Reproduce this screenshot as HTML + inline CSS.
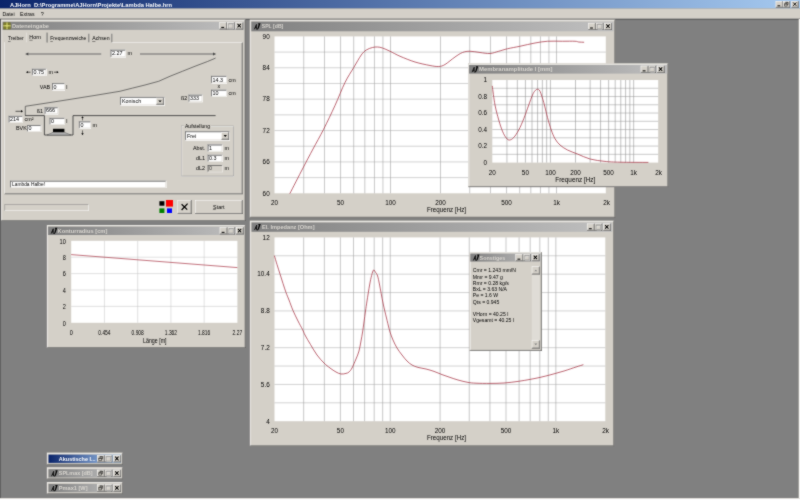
<!DOCTYPE html>
<html><head><meta charset="utf-8"><title>AJHorn</title>
<style>html,body{margin:0;padding:0;background:#808080;overflow:hidden}svg{display:block;font-family:"Liberation Sans",sans-serif}</style></head>
<body>
<svg width="800" height="500" viewBox="0 0 800 500">
<defs><filter id="soft" x="0" y="0" width="800" height="500" filterUnits="userSpaceOnUse" color-interpolation-filters="sRGB"><feConvolveMatrix order="3" kernelMatrix="1 2 1 2 16 2 1 2 1" divisor="28" edgeMode="duplicate" preserveAlpha="true"/></filter><linearGradient id="gA" x1="0" x2="1" y1="0" y2="0"><stop offset="0" stop-color="#0a246a"/><stop offset="1" stop-color="#a6caf0"/></linearGradient><linearGradient id="gI" x1="0" x2="1" y1="0" y2="0"><stop offset="0" stop-color="#808080"/><stop offset="1" stop-color="#c0c0c0"/></linearGradient></defs>
<g filter="url(#soft)">
<rect x="0" y="0" width="800" height="500" fill="#808080" />
<rect x="0" y="0" width="800" height="8.5" fill="url(#gA)" />
<text x="10" y="6.6" xml:space="preserve" font-size="5.39" fill="#fff" font-weight="bold" textLength="162" lengthAdjust="spacingAndGlyphs" >AJHorn  D:\Programme\AJHorn\Projekte\Lambda Halbe.hrn</text>
<rect x="775.7" y="1.1" width="7.2" height="6.6" fill="#d4d0c8" />
<rect x="775.7" y="1.1" width="7.2" height="0.49" fill="#ffffff" />
<rect x="775.7" y="1.1" width="0.48" height="6.6" fill="#ffffff" />
<rect x="775.7" y="7.21" width="7.2" height="0.49" fill="#404040" />
<rect x="782.42" y="1.1" width="0.48" height="6.6" fill="#404040" />
<rect x="776.18" y="6.72" width="6.25" height="0.49" fill="#808080" />
<rect x="781.95" y="1.59" width="0.48" height="5.62" fill="#808080" />
<g transform="translate(775.7,1.1) scale(0.45,0.47)"><rect x="4" y="9" width="6" height="2" fill="#000"/></g>
<rect x="782.9" y="1.1" width="7.2" height="6.6" fill="#d4d0c8" />
<rect x="782.9" y="1.1" width="7.2" height="0.49" fill="#ffffff" />
<rect x="782.9" y="1.1" width="0.48" height="6.6" fill="#ffffff" />
<rect x="782.9" y="7.21" width="7.2" height="0.49" fill="#404040" />
<rect x="789.62" y="1.1" width="0.48" height="6.6" fill="#404040" />
<rect x="783.38" y="6.72" width="6.25" height="0.49" fill="#808080" />
<rect x="789.15" y="1.59" width="0.48" height="5.62" fill="#808080" />
<g transform="translate(782.9,1.1) scale(0.45,0.47)"><path d="M5.5 2.5 h6 v5 h-2 M5.5 3.5 h6" stroke="#000" fill="none"/><path d="M3.5 5.5 h6 v5 h-6 z M3.5 6.5 h6" stroke="#000" fill="none"/></g>
<rect x="791.4" y="1.1" width="7.2" height="6.6" fill="#d4d0c8" />
<rect x="791.4" y="1.1" width="7.2" height="0.49" fill="#ffffff" />
<rect x="791.4" y="1.1" width="0.48" height="6.6" fill="#ffffff" />
<rect x="791.4" y="7.21" width="7.2" height="0.49" fill="#404040" />
<rect x="798.12" y="1.1" width="0.48" height="6.6" fill="#404040" />
<rect x="791.88" y="6.72" width="6.25" height="0.49" fill="#808080" />
<rect x="797.65" y="1.59" width="0.48" height="5.62" fill="#808080" />
<g transform="translate(791.4,1.1) scale(0.45,0.47)"><path d="M4 3 L11 10 M11 3 L4 10" stroke="#000" stroke-width="2" fill="none"/></g>
<rect x="0" y="8.5" width="800" height="10.2" fill="#d4d0c8" />
<text x="2.6" y="15.9" xml:space="preserve" font-size="5.39" fill="#000" textLength="12" lengthAdjust="spacingAndGlyphs" >Datei</text>
<text x="20" y="15.9" xml:space="preserve" font-size="5.39" fill="#000" textLength="14.5" lengthAdjust="spacingAndGlyphs" >Extras</text>
<text x="40.8" y="15.9" xml:space="preserve" font-size="5.39" fill="#000" >?</text>
<rect x="0" y="18.7" width="800" height="0.5" fill="#808080" />
<rect x="0" y="19.2" width="800" height="0.5" fill="#404040" />
<rect x="0" y="19.1" width="0.5" height="480.9" fill="#404040" />
<rect x="798.6" y="19.1" width="1.4" height="480.9" fill="#d4d0c8" />
<rect x="799.2" y="19.1" width="0.8" height="480.9" fill="#fff" />
<rect x="0" y="498.1" width="800" height="1.9" fill="#d4d0c8" />
<rect x="0" y="498.6" width="800" height="1.4" fill="#fff" />
<rect x="1.1" y="19.6" width="244.4" height="201.4" fill="#d4d0c8" />
<rect x="1.1" y="19.6" width="244.4" height="0.49" fill="#d4d0c8" />
<rect x="1.1" y="19.6" width="0.48" height="201.4" fill="#d4d0c8" />
<rect x="1.1" y="220.51" width="244.4" height="0.49" fill="#404040" />
<rect x="245.02" y="19.6" width="0.48" height="201.4" fill="#404040" />
<rect x="1.58" y="20.09" width="243.45" height="0.49" fill="#ffffff" />
<rect x="1.58" y="20.09" width="0.48" height="200.42" fill="#ffffff" />
<rect x="1.58" y="220.02" width="243.45" height="0.49" fill="#808080" />
<rect x="244.55" y="20.09" width="0.48" height="200.42" fill="#808080" />
<rect x="2.6" y="21.8" width="241.2" height="8.1" fill="url(#gI)" />
<g transform="translate(3.4,21.93) scale(0.48,0.49)"><rect x="0" y="1" width="15" height="14" fill="#6e6e28"/><path d="M7.5 1 v14 M0 8 h15" stroke="#d6d670" stroke-width="3" fill="none"/><path d="M3 1 v14 M12 1 v14 M0 4 h15 M0 12 h15" stroke="#909038" stroke-width="1" fill="none"/></g>
<text x="12" y="27.85" xml:space="preserve" font-size="5.39" fill="#d8d5cf" font-weight="bold" textLength="37" lengthAdjust="spacingAndGlyphs" >Dateneingabe</text>
<rect x="235.58" y="22.3" width="7.62" height="7.1" fill="#d4d0c8" />
<rect x="235.58" y="22.3" width="7.62" height="0.49" fill="#ffffff" />
<rect x="235.58" y="22.3" width="0.48" height="7.1" fill="#ffffff" />
<rect x="235.58" y="28.91" width="7.62" height="0.49" fill="#404040" />
<rect x="242.72" y="22.3" width="0.48" height="7.1" fill="#404040" />
<rect x="236.06" y="28.42" width="6.67" height="0.49" fill="#808080" />
<rect x="242.25" y="22.79" width="0.48" height="6.12" fill="#808080" />
<g transform="translate(235.58,22.3) scale(0.48,0.51)"><path d="M4 3 L11 10 M11 3 L4 10" stroke="#000" stroke-width="2" fill="none"/></g>
<rect x="226.96" y="22.3" width="7.62" height="7.1" fill="#d4d0c8" />
<rect x="226.96" y="22.3" width="7.62" height="0.49" fill="#ffffff" />
<rect x="226.96" y="22.3" width="0.48" height="7.1" fill="#ffffff" />
<rect x="226.96" y="28.91" width="7.62" height="0.49" fill="#404040" />
<rect x="234.1" y="22.3" width="0.48" height="7.1" fill="#404040" />
<rect x="227.44" y="28.42" width="6.67" height="0.49" fill="#808080" />
<rect x="233.63" y="22.79" width="0.48" height="6.12" fill="#808080" />
<g transform="translate(226.96,22.3) scale(0.48,0.51)"><path d="M4.5 3.5 h9 v9 h-9 z M4.5 4.5 h9" stroke="#fff" fill="none"/><path d="M3.5 2.5 h9 v9 h-9 z M3.5 3.5 h9" stroke="#808080" fill="none"/></g>
<rect x="219.34" y="22.3" width="7.62" height="7.1" fill="#d4d0c8" />
<rect x="219.34" y="22.3" width="7.62" height="0.49" fill="#ffffff" />
<rect x="219.34" y="22.3" width="0.48" height="7.1" fill="#ffffff" />
<rect x="219.34" y="28.91" width="7.62" height="0.49" fill="#404040" />
<rect x="226.49" y="22.3" width="0.48" height="7.1" fill="#404040" />
<rect x="219.82" y="28.42" width="6.67" height="0.49" fill="#808080" />
<rect x="226.01" y="22.79" width="0.48" height="6.12" fill="#808080" />
<g transform="translate(219.34,22.3) scale(0.48,0.51)"><rect x="4" y="9" width="6" height="2" fill="#000"/></g>
<rect x="4.5" y="42.2" width="238.1" height="0.49" fill="#d4d0c8" />
<rect x="4.5" y="42.2" width="0.48" height="152" fill="#d4d0c8" />
<rect x="4.5" y="193.71" width="238.1" height="0.49" fill="#404040" />
<rect x="242.12" y="42.2" width="0.48" height="152" fill="#404040" />
<rect x="4.98" y="193.22" width="237.15" height="0.49" fill="#808080" />
<rect x="241.65" y="42.69" width="0.48" height="151.02" fill="#808080" />
<rect x="112" y="42.2" width="130.6" height="0.49" fill="#fff" />
<rect x="4.5" y="42.2" width="0.48" height="151.51" fill="#fff" />
<rect x="26" y="32.2" width="21.4" height="10.49" fill="#d4d0c8" />
<rect x="26" y="32.6" width="0.48" height="9.6" fill="#f0efec" />
<rect x="46.92" y="32.6" width="0.48" height="10" fill="#404040" />
<rect x="46.45" y="32.6" width="0.48" height="9.8" fill="#808080" />
<rect x="88.72" y="33.8" width="0.48" height="8.4" fill="#404040" />
<rect x="88.25" y="33.8" width="0.48" height="8.4" fill="#808080" />
<rect x="111.72" y="33.8" width="0.48" height="8.4" fill="#404040" />
<rect x="111.25" y="33.8" width="0.48" height="8.4" fill="#808080" />
<text x="8" y="40.4" xml:space="preserve" font-size="5.39" fill="#000" textLength="15.6" lengthAdjust="spacingAndGlyphs" >Treiber</text>
<rect x="8" y="41" width="2.6" height="0.4" fill="#000" />
<text x="29.3" y="39.3" xml:space="preserve" font-size="5.39" fill="#000" textLength="11.8" lengthAdjust="spacingAndGlyphs" >Horn</text>
<rect x="29.3" y="39.9" width="3.3" height="0.4" fill="#000" />
<text x="50.3" y="40.4" xml:space="preserve" font-size="5.39" fill="#000" textLength="36" lengthAdjust="spacingAndGlyphs" >Frequenzweiche</text>
<rect x="50.3" y="41" width="2.5" height="0.4" fill="#000" />
<text x="92.2" y="40.4" xml:space="preserve" font-size="5.39" fill="#000" textLength="17.4" lengthAdjust="spacingAndGlyphs" >Achsen</text>
<rect x="92.2" y="41" width="3.2" height="0.4" fill="#000" />
<line x1="27" y1="54" x2="101.2" y2="54" stroke="#686868" stroke-width="1.1" />
<path d="M25.1 54 l3.2 -1.4 v2.8z" fill="#484848"/>
<line x1="140" y1="54" x2="214" y2="54" stroke="#686868" stroke-width="1.1" />
<path d="M216.2 54 l-3.2 -1.4 v2.8z" fill="#484848"/>
<rect x="110.4" y="49.6" width="15.4" height="7.8" fill="#fff" />
<rect x="110.4" y="49.6" width="15.4" height="0.49" fill="#808080" />
<rect x="110.4" y="49.6" width="0.48" height="7.8" fill="#808080" />
<rect x="110.4" y="56.91" width="15.4" height="0.49" fill="#ffffff" />
<rect x="125.32" y="49.6" width="0.48" height="7.8" fill="#ffffff" />
<rect x="110.88" y="50.09" width="14.45" height="0.49" fill="#404040" />
<rect x="110.88" y="50.09" width="0.48" height="6.82" fill="#404040" />
<rect x="110.88" y="56.42" width="14.45" height="0.49" fill="#d4d0c8" />
<rect x="124.85" y="50.09" width="0.48" height="6.82" fill="#d4d0c8" />
<text x="112" y="55.4" xml:space="preserve" font-size="5.39" fill="#000" >2.27</text>
<text x="127.6" y="55.4" xml:space="preserve" font-size="5.39" fill="#000" >m</text>
<rect x="31.9" y="68.7" width="14.6" height="7" fill="#fff" />
<rect x="31.9" y="68.7" width="14.6" height="0.49" fill="#808080" />
<rect x="31.9" y="68.7" width="0.48" height="7" fill="#808080" />
<rect x="31.9" y="75.21" width="14.6" height="0.49" fill="#ffffff" />
<rect x="46.02" y="68.7" width="0.48" height="7" fill="#ffffff" />
<rect x="32.38" y="69.19" width="13.65" height="0.49" fill="#404040" />
<rect x="32.38" y="69.19" width="0.48" height="6.02" fill="#404040" />
<rect x="32.38" y="74.72" width="13.65" height="0.49" fill="#d4d0c8" />
<rect x="45.55" y="69.19" width="0.48" height="6.02" fill="#d4d0c8" />
<text x="33.5" y="73.7" xml:space="preserve" font-size="5.39" fill="#000" >0.75</text>
<text x="48.4" y="73.8" xml:space="preserve" font-size="5.39" fill="#000" >m</text>
<line x1="27" y1="72.2" x2="30.5" y2="72.2" stroke="#000" stroke-width="0.6" />
<path d="M26 72.2 l1.8 -1.1 v2.2z" fill="#000"/>
<line x1="54" y1="72.2" x2="57.5" y2="72.2" stroke="#000" stroke-width="0.6" />
<path d="M58.6 72.2 l-1.8 -1.1 v2.2z" fill="#000"/>
<text x="39.8" y="88.6" xml:space="preserve" font-size="5.39" fill="#000" >VAB</text>
<rect x="52" y="83.1" width="13" height="7.4" fill="#fff" />
<rect x="52" y="83.1" width="13" height="0.49" fill="#808080" />
<rect x="52" y="83.1" width="0.48" height="7.4" fill="#808080" />
<rect x="52" y="90.01" width="13" height="0.49" fill="#ffffff" />
<rect x="64.52" y="83.1" width="0.48" height="7.4" fill="#ffffff" />
<rect x="52.48" y="83.59" width="12.05" height="0.49" fill="#404040" />
<rect x="52.48" y="83.59" width="0.48" height="6.42" fill="#404040" />
<rect x="52.48" y="89.52" width="12.05" height="0.49" fill="#d4d0c8" />
<rect x="64.05" y="83.59" width="0.48" height="6.42" fill="#d4d0c8" />
<text x="53.6" y="88.5" xml:space="preserve" font-size="5.39" fill="#000" >0</text>
<text x="66.2" y="88.6" xml:space="preserve" font-size="5.39" fill="#000" >l</text>
<polyline points="25.3,115.6 25.3,106.3 45,103.3 70,99.4 95,95.4 120,91.25 132.5,88.1 145,85 158.75,81.25 170,76.25 182.5,71.25 195,66.25 207.5,61.5 215.6,58.1" fill="none" stroke="#404040" stroke-width="0.7"/>
<polyline points="25,115.6 44.4,115.6 44.4,135 73,135 73,115.6 215.6,115.6" fill="none" stroke="#404040" stroke-width="0.9"/>
<line x1="15.5" y1="111.3" x2="21.5" y2="111.3" stroke="#000" stroke-width="0.6" />
<path d="M23 111.3 l-2 -1.2 v2.4z" fill="#000"/>
<text x="36.8" y="113" xml:space="preserve" font-size="5.39" fill="#000" >ß1</text>
<rect x="44.5" y="107.2" width="13.7" height="7.2" fill="#fff" />
<rect x="44.5" y="107.2" width="13.7" height="0.49" fill="#808080" />
<rect x="44.5" y="107.2" width="0.48" height="7.2" fill="#808080" />
<rect x="44.5" y="113.91" width="13.7" height="0.49" fill="#ffffff" />
<rect x="57.72" y="107.2" width="0.48" height="7.2" fill="#ffffff" />
<rect x="44.98" y="107.69" width="12.75" height="0.49" fill="#404040" />
<rect x="44.98" y="107.69" width="0.48" height="6.22" fill="#404040" />
<rect x="44.98" y="113.42" width="12.75" height="0.49" fill="#d4d0c8" />
<rect x="57.25" y="107.69" width="0.48" height="6.22" fill="#d4d0c8" />
<text x="46.1" y="112.4" xml:space="preserve" font-size="5.39" fill="#000" >666</text>
<rect x="8.5" y="115.8" width="14.5" height="7.2" fill="#fff" />
<rect x="8.5" y="115.8" width="14.5" height="0.49" fill="#808080" />
<rect x="8.5" y="115.8" width="0.48" height="7.2" fill="#808080" />
<rect x="8.5" y="122.51" width="14.5" height="0.49" fill="#ffffff" />
<rect x="22.52" y="115.8" width="0.48" height="7.2" fill="#ffffff" />
<rect x="8.98" y="116.29" width="13.55" height="0.49" fill="#404040" />
<rect x="8.98" y="116.29" width="0.48" height="6.22" fill="#404040" />
<rect x="8.98" y="122.02" width="13.55" height="0.49" fill="#d4d0c8" />
<rect x="22.05" y="116.29" width="0.48" height="6.22" fill="#d4d0c8" />
<text x="10.1" y="121" xml:space="preserve" font-size="5.39" fill="#000" >214</text>
<text x="24.6" y="121.4" xml:space="preserve" font-size="5.39" fill="#000" >cm²</text>
<text x="16" y="130.2" xml:space="preserve" font-size="5.39" fill="#000" >BVK</text>
<rect x="27" y="125" width="14.2" height="7" fill="#fff" />
<rect x="27" y="125" width="14.2" height="0.49" fill="#808080" />
<rect x="27" y="125" width="0.48" height="7" fill="#808080" />
<rect x="27" y="131.51" width="14.2" height="0.49" fill="#ffffff" />
<rect x="40.72" y="125" width="0.48" height="7" fill="#ffffff" />
<rect x="27.48" y="125.49" width="13.25" height="0.49" fill="#404040" />
<rect x="27.48" y="125.49" width="0.48" height="6.02" fill="#404040" />
<rect x="27.48" y="131.02" width="13.25" height="0.49" fill="#d4d0c8" />
<rect x="40.25" y="125.49" width="0.48" height="6.02" fill="#d4d0c8" />
<text x="28.6" y="130" xml:space="preserve" font-size="5.39" fill="#000" >0</text>
<rect x="49.4" y="117.8" width="15.6" height="7.2" fill="#fff" />
<rect x="49.4" y="117.8" width="15.6" height="0.49" fill="#808080" />
<rect x="49.4" y="117.8" width="0.48" height="7.2" fill="#808080" />
<rect x="49.4" y="124.51" width="15.6" height="0.49" fill="#ffffff" />
<rect x="64.52" y="117.8" width="0.48" height="7.2" fill="#ffffff" />
<rect x="49.88" y="118.29" width="14.65" height="0.49" fill="#404040" />
<rect x="49.88" y="118.29" width="0.48" height="6.22" fill="#404040" />
<rect x="49.88" y="124.02" width="14.65" height="0.49" fill="#d4d0c8" />
<rect x="64.05" y="118.29" width="0.48" height="6.22" fill="#d4d0c8" />
<text x="51" y="123" xml:space="preserve" font-size="5.39" fill="#000" >0</text>
<text x="66.2" y="123.2" xml:space="preserve" font-size="5.39" fill="#000" >l</text>
<rect x="53" y="128.8" width="11.4" height="3.5" fill="#000" />
<path d="M53 132.3 L47 135 L71 135 L64.4 132.3z" fill="#b0b0b0" stroke="#404040" stroke-width="0.4"/>
<rect x="78.8" y="121.3" width="12.2" height="7.4" fill="#fff" />
<rect x="78.8" y="121.3" width="12.2" height="0.49" fill="#808080" />
<rect x="78.8" y="121.3" width="0.48" height="7.4" fill="#808080" />
<rect x="78.8" y="128.21" width="12.2" height="0.49" fill="#ffffff" />
<rect x="90.52" y="121.3" width="0.48" height="7.4" fill="#ffffff" />
<rect x="79.28" y="121.79" width="11.25" height="0.49" fill="#404040" />
<rect x="79.28" y="121.79" width="0.48" height="6.42" fill="#404040" />
<rect x="79.28" y="127.72" width="11.25" height="0.49" fill="#d4d0c8" />
<rect x="90.05" y="121.79" width="0.48" height="6.42" fill="#d4d0c8" />
<text x="80.4" y="126.7" xml:space="preserve" font-size="5.39" fill="#000" >0</text>
<text x="92.6" y="127" xml:space="preserve" font-size="5.39" fill="#000" >m</text>
<line x1="82.5" y1="117" x2="82.5" y2="120.4" stroke="#000" stroke-width="0.5" />
<path d="M82.5 116.2 l-1.2 1.9 h2.4z" fill="#000"/>
<line x1="82.5" y1="130.4" x2="82.5" y2="134" stroke="#000" stroke-width="0.5" />
<path d="M82.5 135.2 l-1.2 -1.9 h2.4z" fill="#000"/>
<rect x="120" y="96.9" width="44.8" height="8.7" fill="#fff" />
<rect x="120" y="96.9" width="44.8" height="0.49" fill="#808080" />
<rect x="120" y="96.9" width="0.48" height="8.7" fill="#808080" />
<rect x="120" y="105.11" width="44.8" height="0.49" fill="#ffffff" />
<rect x="164.32" y="96.9" width="0.48" height="8.7" fill="#ffffff" />
<rect x="120.48" y="97.39" width="43.85" height="0.49" fill="#404040" />
<rect x="120.48" y="97.39" width="0.48" height="7.72" fill="#404040" />
<rect x="120.48" y="104.62" width="43.85" height="0.49" fill="#d4d0c8" />
<rect x="163.85" y="97.39" width="0.48" height="7.72" fill="#d4d0c8" />
<rect x="156.23" y="97.88" width="7.62" height="6.74" fill="#d4d0c8" />
<rect x="156.23" y="97.88" width="7.62" height="0.49" fill="#ffffff" />
<rect x="156.23" y="97.88" width="0.48" height="6.74" fill="#ffffff" />
<rect x="156.23" y="104.13" width="7.62" height="0.49" fill="#404040" />
<rect x="163.37" y="97.88" width="0.48" height="6.74" fill="#404040" />
<rect x="156.7" y="103.64" width="6.67" height="0.49" fill="#808080" />
<rect x="162.9" y="98.37" width="0.48" height="5.76" fill="#808080" />
<path d="M158.34 100.45 h3.4 l-1.7 1.8z" fill="#000"/>
<text x="122" y="103" xml:space="preserve" font-size="5.39" fill="#000" >Konisch</text>
<text x="181" y="100.2" xml:space="preserve" font-size="5.39" fill="#000" >ß2</text>
<rect x="188.4" y="94.6" width="14.2" height="7.6" fill="#fff" />
<rect x="188.4" y="94.6" width="14.2" height="0.49" fill="#808080" />
<rect x="188.4" y="94.6" width="0.48" height="7.6" fill="#808080" />
<rect x="188.4" y="101.71" width="14.2" height="0.49" fill="#ffffff" />
<rect x="202.12" y="94.6" width="0.48" height="7.6" fill="#ffffff" />
<rect x="188.88" y="95.09" width="13.25" height="0.49" fill="#404040" />
<rect x="188.88" y="95.09" width="0.48" height="6.62" fill="#404040" />
<rect x="188.88" y="101.22" width="13.25" height="0.49" fill="#d4d0c8" />
<rect x="201.65" y="95.09" width="0.48" height="6.62" fill="#d4d0c8" />
<text x="190" y="100.2" xml:space="preserve" font-size="5.39" fill="#000" >333</text>
<rect x="211" y="75.8" width="16" height="7.8" fill="#fff" />
<rect x="211" y="75.8" width="16" height="0.49" fill="#808080" />
<rect x="211" y="75.8" width="0.48" height="7.8" fill="#808080" />
<rect x="211" y="83.11" width="16" height="0.49" fill="#ffffff" />
<rect x="226.52" y="75.8" width="0.48" height="7.8" fill="#ffffff" />
<rect x="211.48" y="76.29" width="15.05" height="0.49" fill="#404040" />
<rect x="211.48" y="76.29" width="0.48" height="6.82" fill="#404040" />
<rect x="211.48" y="82.62" width="15.05" height="0.49" fill="#d4d0c8" />
<rect x="226.05" y="76.29" width="0.48" height="6.82" fill="#d4d0c8" />
<text x="212.6" y="81.6" xml:space="preserve" font-size="5.39" fill="#000" >14.3</text>
<text x="228.6" y="81.6" xml:space="preserve" font-size="5.39" fill="#000" >cm</text>
<text x="217.6" y="88.4" xml:space="preserve" font-size="5.39" fill="#000" >x</text>
<rect x="211" y="89.6" width="16" height="7.3" fill="#fff" />
<rect x="211" y="89.6" width="16" height="0.49" fill="#808080" />
<rect x="211" y="89.6" width="0.48" height="7.3" fill="#808080" />
<rect x="211" y="96.41" width="16" height="0.49" fill="#ffffff" />
<rect x="226.52" y="89.6" width="0.48" height="7.3" fill="#ffffff" />
<rect x="211.48" y="90.09" width="15.05" height="0.49" fill="#404040" />
<rect x="211.48" y="90.09" width="0.48" height="6.32" fill="#404040" />
<rect x="211.48" y="95.92" width="15.05" height="0.49" fill="#d4d0c8" />
<rect x="226.05" y="90.09" width="0.48" height="6.32" fill="#d4d0c8" />
<text x="212.6" y="94.9" xml:space="preserve" font-size="5.39" fill="#000" >10</text>
<text x="228.6" y="95" xml:space="preserve" font-size="5.39" fill="#000" >cm</text>
<rect x="181.2" y="125.8" width="52.8" height="0.49" fill="#808080" />
<rect x="181.2" y="125.8" width="0.48" height="51" fill="#808080" />
<rect x="181.2" y="176.31" width="52.8" height="0.49" fill="#ffffff" />
<rect x="233.52" y="125.8" width="0.48" height="51" fill="#ffffff" />
<rect x="181.68" y="126.29" width="51.85" height="0.49" fill="#ffffff" />
<rect x="181.68" y="126.29" width="0.48" height="50.02" fill="#ffffff" />
<rect x="181.68" y="175.82" width="51.85" height="0.49" fill="#808080" />
<rect x="233.05" y="126.29" width="0.48" height="50.02" fill="#808080" />
<rect x="184" y="124" width="27" height="4" fill="#d4d0c8" />
<text x="185" y="128" xml:space="preserve" font-size="5.39" fill="#000" textLength="25" lengthAdjust="spacingAndGlyphs" >Aufstellung</text>
<rect x="185" y="131.2" width="45" height="9.4" fill="#fff" />
<rect x="185" y="131.2" width="45" height="0.49" fill="#808080" />
<rect x="185" y="131.2" width="0.48" height="9.4" fill="#808080" />
<rect x="185" y="140.11" width="45" height="0.49" fill="#ffffff" />
<rect x="229.52" y="131.2" width="0.48" height="9.4" fill="#ffffff" />
<rect x="185.48" y="131.69" width="44.05" height="0.49" fill="#404040" />
<rect x="185.48" y="131.69" width="0.48" height="8.42" fill="#404040" />
<rect x="185.48" y="139.62" width="44.05" height="0.49" fill="#d4d0c8" />
<rect x="229.05" y="131.69" width="0.48" height="8.42" fill="#d4d0c8" />
<rect x="221.43" y="132.18" width="7.62" height="7.44" fill="#d4d0c8" />
<rect x="221.43" y="132.18" width="7.62" height="0.49" fill="#ffffff" />
<rect x="221.43" y="132.18" width="0.48" height="7.44" fill="#ffffff" />
<rect x="221.43" y="139.13" width="7.62" height="0.49" fill="#404040" />
<rect x="228.57" y="132.18" width="0.48" height="7.44" fill="#404040" />
<rect x="221.9" y="138.64" width="6.67" height="0.49" fill="#808080" />
<rect x="228.1" y="132.67" width="0.48" height="6.46" fill="#808080" />
<path d="M223.54 135.1 h3.4 l-1.7 1.8z" fill="#000"/>
<text x="187" y="138" xml:space="preserve" font-size="5.39" fill="#000" >Frei</text>
<text x="193" y="150" xml:space="preserve" font-size="5.39" fill="#000" >Abst.</text>
<rect x="207.5" y="144.4" width="15.1" height="7.5" fill="#fff" />
<rect x="207.5" y="144.4" width="15.1" height="0.49" fill="#808080" />
<rect x="207.5" y="144.4" width="0.48" height="7.5" fill="#808080" />
<rect x="207.5" y="151.41" width="15.1" height="0.49" fill="#ffffff" />
<rect x="222.12" y="144.4" width="0.48" height="7.5" fill="#ffffff" />
<rect x="207.98" y="144.89" width="14.15" height="0.49" fill="#404040" />
<rect x="207.98" y="144.89" width="0.48" height="6.52" fill="#404040" />
<rect x="207.98" y="150.92" width="14.15" height="0.49" fill="#d4d0c8" />
<rect x="221.65" y="144.89" width="0.48" height="6.52" fill="#d4d0c8" />
<text x="209.1" y="149.9" xml:space="preserve" font-size="5.39" fill="#000" >1</text>
<text x="224.6" y="150" xml:space="preserve" font-size="5.39" fill="#000" >m</text>
<text x="196" y="160" xml:space="preserve" font-size="5.39" fill="#000" >dL1</text>
<rect x="207.5" y="154.7" width="15.1" height="7.3" fill="#fff" />
<rect x="207.5" y="154.7" width="15.1" height="0.49" fill="#808080" />
<rect x="207.5" y="154.7" width="0.48" height="7.3" fill="#808080" />
<rect x="207.5" y="161.51" width="15.1" height="0.49" fill="#ffffff" />
<rect x="222.12" y="154.7" width="0.48" height="7.3" fill="#ffffff" />
<rect x="207.98" y="155.19" width="14.15" height="0.49" fill="#404040" />
<rect x="207.98" y="155.19" width="0.48" height="6.32" fill="#404040" />
<rect x="207.98" y="161.02" width="14.15" height="0.49" fill="#d4d0c8" />
<rect x="221.65" y="155.19" width="0.48" height="6.32" fill="#d4d0c8" />
<text x="209.1" y="160" xml:space="preserve" font-size="5.39" fill="#000" >0.3</text>
<text x="224.6" y="160" xml:space="preserve" font-size="5.39" fill="#000" >m</text>
<text x="196" y="170.2" xml:space="preserve" font-size="5.39" fill="#000" >dL2</text>
<rect x="207.5" y="165" width="15.1" height="7.2" fill="#d4d0c8" />
<rect x="207.5" y="165" width="15.1" height="0.49" fill="#808080" />
<rect x="207.5" y="165" width="0.48" height="7.2" fill="#808080" />
<rect x="207.5" y="171.71" width="15.1" height="0.49" fill="#ffffff" />
<rect x="222.12" y="165" width="0.48" height="7.2" fill="#ffffff" />
<rect x="207.98" y="165.49" width="14.15" height="0.49" fill="#404040" />
<rect x="207.98" y="165.49" width="0.48" height="6.22" fill="#404040" />
<rect x="207.98" y="171.22" width="14.15" height="0.49" fill="#d4d0c8" />
<rect x="221.65" y="165.49" width="0.48" height="6.22" fill="#d4d0c8" />
<text x="209.1" y="170.2" xml:space="preserve" font-size="5.39" fill="#404040" >0</text>
<text x="224.6" y="170.2" xml:space="preserve" font-size="5.39" fill="#000" >m</text>
<rect x="10" y="180.6" width="156.3" height="7.4" fill="#fff" />
<rect x="10" y="180.6" width="156.3" height="0.49" fill="#808080" />
<rect x="10" y="180.6" width="0.48" height="7.4" fill="#808080" />
<rect x="10" y="187.51" width="156.3" height="0.49" fill="#ffffff" />
<rect x="165.82" y="180.6" width="0.48" height="7.4" fill="#ffffff" />
<rect x="10.48" y="181.09" width="155.35" height="0.49" fill="#404040" />
<rect x="10.48" y="181.09" width="0.48" height="6.42" fill="#404040" />
<rect x="10.48" y="187.02" width="155.35" height="0.49" fill="#d4d0c8" />
<rect x="165.35" y="181.09" width="0.48" height="6.42" fill="#d4d0c8" />
<text x="12" y="186" xml:space="preserve" font-size="5.39" fill="#000" textLength="33" lengthAdjust="spacingAndGlyphs" >Lambda Halbe!</text>
<rect x="4.6" y="204.4" width="84" height="6.6" fill="#d4d0c8" />
<rect x="4.6" y="204.4" width="84" height="0.49" fill="#808080" />
<rect x="4.6" y="204.4" width="0.48" height="6.6" fill="#808080" />
<rect x="4.6" y="210.51" width="84" height="0.49" fill="#ffffff" />
<rect x="88.12" y="204.4" width="0.48" height="6.6" fill="#ffffff" />
<rect x="159.4" y="201.2" width="5" height="4.5" fill="#000" />
<rect x="166" y="200" width="7" height="6.6" fill="#ff0000" />
<rect x="159.4" y="208.4" width="5" height="4.6" fill="#008000" />
<rect x="167" y="208.4" width="5" height="4.6" fill="#0000ff" />
<rect x="177.5" y="200" width="14.1" height="13.9" fill="#d4d0c8" />
<rect x="177.5" y="200" width="14.1" height="0.49" fill="#ffffff" />
<rect x="177.5" y="200" width="0.48" height="13.9" fill="#ffffff" />
<rect x="177.5" y="213.41" width="14.1" height="0.49" fill="#404040" />
<rect x="191.12" y="200" width="0.48" height="13.9" fill="#404040" />
<rect x="177.98" y="212.92" width="13.15" height="0.49" fill="#808080" />
<rect x="190.65" y="200.49" width="0.48" height="12.92" fill="#808080" />
<path d="M181.6 204.2 l5.6 5.4 M187.6 203.6 l-6 6.4" stroke="#000" stroke-width="1.25" fill="none"/>
<rect x="195" y="200" width="47.6" height="14" fill="#d4d0c8" />
<rect x="195" y="200" width="47.6" height="0.49" fill="#ffffff" />
<rect x="195" y="200" width="0.48" height="14" fill="#ffffff" />
<rect x="195" y="213.51" width="47.6" height="0.49" fill="#404040" />
<rect x="242.12" y="200" width="0.48" height="14" fill="#404040" />
<rect x="195.48" y="213.02" width="46.65" height="0.49" fill="#808080" />
<rect x="241.65" y="200.49" width="0.48" height="13.02" fill="#808080" />
<text x="218.8" y="209" xml:space="preserve" font-size="5.39" fill="#000" text-anchor="middle" >Start</text>
<rect x="212.9" y="209.6" width="2.9" height="0.4" fill="#000" />
<rect x="249.8" y="19.7" width="365.4" height="198" fill="#d4d0c8" />
<rect x="249.8" y="19.7" width="365.4" height="0.49" fill="#d4d0c8" />
<rect x="249.8" y="19.7" width="0.48" height="198" fill="#d4d0c8" />
<rect x="249.8" y="217.21" width="365.4" height="0.49" fill="#404040" />
<rect x="614.72" y="19.7" width="0.48" height="198" fill="#404040" />
<rect x="250.28" y="20.19" width="364.45" height="0.49" fill="#ffffff" />
<rect x="250.28" y="20.19" width="0.48" height="197.02" fill="#ffffff" />
<rect x="250.28" y="216.72" width="364.45" height="0.49" fill="#808080" />
<rect x="614.25" y="20.19" width="0.48" height="197.02" fill="#808080" />
<rect x="251.3" y="21.6" width="362.2" height="9.7" fill="url(#gI)" />
<g transform="translate(253.3,22.73) scale(0.48,0.49)"><path d="M2.2 13.5 L6.6 3.5 L6.2 13 M3.6 9.6 L6.6 9.6" stroke="#000" stroke-width="1.7" fill="none"/><path d="M10.5 1.2 L15 1.2 L11.4 11.5 Q10.4 14.6 6.6 14.2 L7 12.4 Q8.6 12.8 9 11 L11.2 3.2 L10 3.2 Z" fill="#000"/></g>
<text x="261.8" y="28.45" xml:space="preserve" font-size="5.39" fill="#d8d5cf" font-weight="bold" textLength="21.5" lengthAdjust="spacingAndGlyphs" >SPL [dB]</text>
<rect x="604.38" y="22.9" width="7.62" height="7.1" fill="#d4d0c8" />
<rect x="604.38" y="22.9" width="7.62" height="0.49" fill="#ffffff" />
<rect x="604.38" y="22.9" width="0.48" height="7.1" fill="#ffffff" />
<rect x="604.38" y="29.51" width="7.62" height="0.49" fill="#404040" />
<rect x="611.52" y="22.9" width="0.48" height="7.1" fill="#404040" />
<rect x="604.86" y="29.02" width="6.67" height="0.49" fill="#808080" />
<rect x="611.05" y="23.39" width="0.48" height="6.12" fill="#808080" />
<g transform="translate(604.38,22.9) scale(0.48,0.51)"><path d="M4 3 L11 10 M11 3 L4 10" stroke="#000" stroke-width="2" fill="none"/></g>
<rect x="595.76" y="22.9" width="7.62" height="7.1" fill="#d4d0c8" />
<rect x="595.76" y="22.9" width="7.62" height="0.49" fill="#ffffff" />
<rect x="595.76" y="22.9" width="0.48" height="7.1" fill="#ffffff" />
<rect x="595.76" y="29.51" width="7.62" height="0.49" fill="#404040" />
<rect x="602.9" y="22.9" width="0.48" height="7.1" fill="#404040" />
<rect x="596.24" y="29.02" width="6.67" height="0.49" fill="#808080" />
<rect x="602.43" y="23.39" width="0.48" height="6.12" fill="#808080" />
<g transform="translate(595.76,22.9) scale(0.48,0.51)"><path d="M4.5 3.5 h9 v9 h-9 z M4.5 4.5 h9" stroke="#fff" fill="none"/><path d="M3.5 2.5 h9 v9 h-9 z M3.5 3.5 h9" stroke="#808080" fill="none"/></g>
<rect x="588.14" y="22.9" width="7.62" height="7.1" fill="#d4d0c8" />
<rect x="588.14" y="22.9" width="7.62" height="0.49" fill="#ffffff" />
<rect x="588.14" y="22.9" width="0.48" height="7.1" fill="#ffffff" />
<rect x="588.14" y="29.51" width="7.62" height="0.49" fill="#404040" />
<rect x="595.29" y="22.9" width="0.48" height="7.1" fill="#404040" />
<rect x="588.62" y="29.02" width="6.67" height="0.49" fill="#808080" />
<rect x="594.81" y="23.39" width="0.48" height="6.12" fill="#808080" />
<g transform="translate(588.14,22.9) scale(0.48,0.51)"><rect x="4" y="9" width="6" height="2" fill="#000"/></g>
<rect x="274.5" y="36.4" width="331.3" height="156.9" fill="#fff" />
<line x1="303.73" y1="36.4" x2="303.73" y2="193.3" stroke="#8c8c8c" stroke-width="0.48" />
<line x1="324.47" y1="36.4" x2="324.47" y2="193.3" stroke="#8c8c8c" stroke-width="0.48" />
<line x1="340.56" y1="36.4" x2="340.56" y2="193.3" stroke="#8c8c8c" stroke-width="0.48" />
<line x1="353.7" y1="36.4" x2="353.7" y2="193.3" stroke="#8c8c8c" stroke-width="0.48" />
<line x1="364.82" y1="36.4" x2="364.82" y2="193.3" stroke="#8c8c8c" stroke-width="0.48" />
<line x1="374.44" y1="36.4" x2="374.44" y2="193.3" stroke="#8c8c8c" stroke-width="0.48" />
<line x1="382.93" y1="36.4" x2="382.93" y2="193.3" stroke="#8c8c8c" stroke-width="0.48" />
<line x1="390.53" y1="36.4" x2="390.53" y2="193.3" stroke="#8c8c8c" stroke-width="0.48" />
<line x1="440.5" y1="36.4" x2="440.5" y2="193.3" stroke="#8c8c8c" stroke-width="0.48" />
<line x1="469.73" y1="36.4" x2="469.73" y2="193.3" stroke="#8c8c8c" stroke-width="0.48" />
<line x1="490.47" y1="36.4" x2="490.47" y2="193.3" stroke="#8c8c8c" stroke-width="0.48" />
<line x1="506.56" y1="36.4" x2="506.56" y2="193.3" stroke="#8c8c8c" stroke-width="0.48" />
<line x1="519.7" y1="36.4" x2="519.7" y2="193.3" stroke="#8c8c8c" stroke-width="0.48" />
<line x1="530.82" y1="36.4" x2="530.82" y2="193.3" stroke="#8c8c8c" stroke-width="0.48" />
<line x1="540.44" y1="36.4" x2="540.44" y2="193.3" stroke="#8c8c8c" stroke-width="0.48" />
<line x1="548.93" y1="36.4" x2="548.93" y2="193.3" stroke="#8c8c8c" stroke-width="0.48" />
<line x1="556.53" y1="36.4" x2="556.53" y2="193.3" stroke="#8c8c8c" stroke-width="0.48" />
<line x1="274.5" y1="52.09" x2="605.8" y2="52.09" stroke="#a2a2a2" stroke-width="0.48" />
<line x1="274.5" y1="67.78" x2="605.8" y2="67.78" stroke="#a2a2a2" stroke-width="0.48" />
<line x1="274.5" y1="83.47" x2="605.8" y2="83.47" stroke="#a2a2a2" stroke-width="0.48" />
<line x1="274.5" y1="99.16" x2="605.8" y2="99.16" stroke="#a2a2a2" stroke-width="0.48" />
<line x1="274.5" y1="114.85" x2="605.8" y2="114.85" stroke="#a2a2a2" stroke-width="0.48" />
<line x1="274.5" y1="130.54" x2="605.8" y2="130.54" stroke="#a2a2a2" stroke-width="0.48" />
<line x1="274.5" y1="146.23" x2="605.8" y2="146.23" stroke="#a2a2a2" stroke-width="0.48" />
<line x1="274.5" y1="161.92" x2="605.8" y2="161.92" stroke="#a2a2a2" stroke-width="0.48" />
<line x1="274.5" y1="177.61" x2="605.8" y2="177.61" stroke="#a2a2a2" stroke-width="0.48" />
<text x="269.7" y="38.7" xml:space="preserve" font-size="6.37" fill="#000" text-anchor="end" >90</text>
<text x="269.7" y="70.08" xml:space="preserve" font-size="6.37" fill="#000" text-anchor="end" >84</text>
<text x="269.7" y="101.46" xml:space="preserve" font-size="6.37" fill="#000" text-anchor="end" >78</text>
<text x="269.7" y="132.84" xml:space="preserve" font-size="6.37" fill="#000" text-anchor="end" >72</text>
<text x="269.7" y="164.22" xml:space="preserve" font-size="6.37" fill="#000" text-anchor="end" >66</text>
<text x="269.7" y="195.6" xml:space="preserve" font-size="6.37" fill="#000" text-anchor="end" >60</text>
<text x="274.5" y="204.8" xml:space="preserve" font-size="6.37" fill="#000" text-anchor="middle" >20</text>
<text x="340.56" y="204.8" xml:space="preserve" font-size="6.37" fill="#000" text-anchor="middle" >50</text>
<text x="390.53" y="204.8" xml:space="preserve" font-size="6.37" fill="#000" text-anchor="middle" >100</text>
<text x="440.5" y="204.8" xml:space="preserve" font-size="6.37" fill="#000" text-anchor="middle" >200</text>
<text x="506.56" y="204.8" xml:space="preserve" font-size="6.37" fill="#000" text-anchor="middle" >500</text>
<text x="556.53" y="204.8" xml:space="preserve" font-size="6.37" fill="#000" text-anchor="middle" >1k</text>
<text x="606.5" y="204.8" xml:space="preserve" font-size="6.37" fill="#000" text-anchor="middle" >2k</text>
<text x="427" y="212.3" xml:space="preserve" font-size="6.37" fill="#000" textLength="39" lengthAdjust="spacingAndGlyphs" >Frequenz [Hz]</text>
<path d="M290 193.3 C292.17 189.08 299.17 175.38 303 168 C306.83 160.62 309.58 155.42 313 149 C316.42 142.58 319.83 136.75 323.5 129.5 C327.17 122.25 331.42 113.33 335 105.5 C338.58 97.67 341.88 88.83 345 82.5 C348.12 76.17 351.04 72.08 353.75 67.5 C356.46 62.92 359.17 57.92 361.25 55 C363.33 52.08 364.38 51.25 366.25 50 C368.12 48.75 370.62 48 372.5 47.5 C374.38 47 375.83 46.92 377.5 47 C379.17 47.08 380.42 47.29 382.5 48 C384.58 48.71 387.08 49.88 390 51.25 C392.92 52.62 395.83 54.46 400 56.25 C404.17 58.04 410 60.46 415 62 C420 63.54 426.04 64.75 430 65.5 C433.96 66.25 436.25 66.67 438.75 66.5 C441.25 66.33 442.29 66.08 445 64.5 C447.71 62.92 452.08 59 455 57 C457.92 55 460 53.46 462.5 52.5 C465 51.54 467.08 51.25 470 51.25 C472.92 51.25 476.67 52.12 480 52.5 C483.33 52.88 486.88 53.71 490 53.5 C493.12 53.29 495.83 52.04 498.75 51.25 C501.67 50.46 503.96 49.58 507.5 48.75 C511.04 47.92 515.42 47.21 520 46.25 C524.58 45.29 530.42 43.83 535 43 C539.58 42.17 542.92 41.54 547.5 41.25 C552.08 40.96 557.92 41.25 562.5 41.25 C567.08 41.25 572.29 41.12 575 41.25 C577.71 41.38 577.29 41.83 578.75 42 C580.21 42.17 582.92 42.21 583.75 42.25" fill="none" stroke="#a43242" stroke-width="0.75" stroke-linecap="round"/>
<rect x="249.9" y="220.7" width="364.2" height="225.5" fill="#d4d0c8" />
<rect x="249.9" y="220.7" width="364.2" height="0.49" fill="#d4d0c8" />
<rect x="249.9" y="220.7" width="0.48" height="225.5" fill="#d4d0c8" />
<rect x="249.9" y="445.71" width="364.2" height="0.49" fill="#404040" />
<rect x="613.62" y="220.7" width="0.48" height="225.5" fill="#404040" />
<rect x="250.38" y="221.19" width="363.25" height="0.49" fill="#ffffff" />
<rect x="250.38" y="221.19" width="0.48" height="224.52" fill="#ffffff" />
<rect x="250.38" y="445.22" width="363.25" height="0.49" fill="#808080" />
<rect x="613.15" y="221.19" width="0.48" height="224.52" fill="#808080" />
<rect x="251.5" y="222.5" width="360.8" height="9.3" fill="url(#gI)" />
<g transform="translate(253.5,223.43) scale(0.48,0.49)"><path d="M2.2 13.5 L6.6 3.5 L6.2 13 M3.6 9.6 L6.6 9.6" stroke="#000" stroke-width="1.7" fill="none"/><path d="M10.5 1.2 L15 1.2 L11.4 11.5 Q10.4 14.6 6.6 14.2 L7 12.4 Q8.6 12.8 9 11 L11.2 3.2 L10 3.2 Z" fill="#000"/></g>
<text x="262" y="229.15" xml:space="preserve" font-size="5.39" fill="#d8d5cf" font-weight="bold" textLength="52.5" lengthAdjust="spacingAndGlyphs" >El. Impedanz [Ohm]</text>
<rect x="603.18" y="223.6" width="7.62" height="7.1" fill="#d4d0c8" />
<rect x="603.18" y="223.6" width="7.62" height="0.49" fill="#ffffff" />
<rect x="603.18" y="223.6" width="0.48" height="7.1" fill="#ffffff" />
<rect x="603.18" y="230.21" width="7.62" height="0.49" fill="#404040" />
<rect x="610.32" y="223.6" width="0.48" height="7.1" fill="#404040" />
<rect x="603.66" y="229.72" width="6.67" height="0.49" fill="#808080" />
<rect x="609.85" y="224.09" width="0.48" height="6.12" fill="#808080" />
<g transform="translate(603.18,223.6) scale(0.48,0.51)"><path d="M4 3 L11 10 M11 3 L4 10" stroke="#000" stroke-width="2" fill="none"/></g>
<rect x="594.56" y="223.6" width="7.62" height="7.1" fill="#d4d0c8" />
<rect x="594.56" y="223.6" width="7.62" height="0.49" fill="#ffffff" />
<rect x="594.56" y="223.6" width="0.48" height="7.1" fill="#ffffff" />
<rect x="594.56" y="230.21" width="7.62" height="0.49" fill="#404040" />
<rect x="601.7" y="223.6" width="0.48" height="7.1" fill="#404040" />
<rect x="595.04" y="229.72" width="6.67" height="0.49" fill="#808080" />
<rect x="601.23" y="224.09" width="0.48" height="6.12" fill="#808080" />
<g transform="translate(594.56,223.6) scale(0.48,0.51)"><path d="M4.5 3.5 h9 v9 h-9 z M4.5 4.5 h9" stroke="#fff" fill="none"/><path d="M3.5 2.5 h9 v9 h-9 z M3.5 3.5 h9" stroke="#808080" fill="none"/></g>
<rect x="586.94" y="223.6" width="7.62" height="7.1" fill="#d4d0c8" />
<rect x="586.94" y="223.6" width="7.62" height="0.49" fill="#ffffff" />
<rect x="586.94" y="223.6" width="0.48" height="7.1" fill="#ffffff" />
<rect x="586.94" y="230.21" width="7.62" height="0.49" fill="#404040" />
<rect x="594.09" y="223.6" width="0.48" height="7.1" fill="#404040" />
<rect x="587.42" y="229.72" width="6.67" height="0.49" fill="#808080" />
<rect x="593.61" y="224.09" width="0.48" height="6.12" fill="#808080" />
<g transform="translate(586.94,223.6) scale(0.48,0.51)"><rect x="4" y="9" width="6" height="2" fill="#000"/></g>
<rect x="274.5" y="237.4" width="330.8" height="183.8" fill="#fff" />
<line x1="303.66" y1="237.4" x2="303.66" y2="421.2" stroke="#8c8c8c" stroke-width="0.48" />
<line x1="324.35" y1="237.4" x2="324.35" y2="421.2" stroke="#8c8c8c" stroke-width="0.48" />
<line x1="340.4" y1="237.4" x2="340.4" y2="421.2" stroke="#8c8c8c" stroke-width="0.48" />
<line x1="353.51" y1="237.4" x2="353.51" y2="421.2" stroke="#8c8c8c" stroke-width="0.48" />
<line x1="364.6" y1="237.4" x2="364.6" y2="421.2" stroke="#8c8c8c" stroke-width="0.48" />
<line x1="374.2" y1="237.4" x2="374.2" y2="421.2" stroke="#8c8c8c" stroke-width="0.48" />
<line x1="382.67" y1="237.4" x2="382.67" y2="421.2" stroke="#8c8c8c" stroke-width="0.48" />
<line x1="390.25" y1="237.4" x2="390.25" y2="421.2" stroke="#8c8c8c" stroke-width="0.48" />
<line x1="440.1" y1="237.4" x2="440.1" y2="421.2" stroke="#8c8c8c" stroke-width="0.48" />
<line x1="469.26" y1="237.4" x2="469.26" y2="421.2" stroke="#8c8c8c" stroke-width="0.48" />
<line x1="489.95" y1="237.4" x2="489.95" y2="421.2" stroke="#8c8c8c" stroke-width="0.48" />
<line x1="506" y1="237.4" x2="506" y2="421.2" stroke="#8c8c8c" stroke-width="0.48" />
<line x1="519.11" y1="237.4" x2="519.11" y2="421.2" stroke="#8c8c8c" stroke-width="0.48" />
<line x1="530.2" y1="237.4" x2="530.2" y2="421.2" stroke="#8c8c8c" stroke-width="0.48" />
<line x1="539.8" y1="237.4" x2="539.8" y2="421.2" stroke="#8c8c8c" stroke-width="0.48" />
<line x1="548.27" y1="237.4" x2="548.27" y2="421.2" stroke="#8c8c8c" stroke-width="0.48" />
<line x1="555.85" y1="237.4" x2="555.85" y2="421.2" stroke="#8c8c8c" stroke-width="0.48" />
<line x1="274.5" y1="255.78" x2="605.3" y2="255.78" stroke="#a2a2a2" stroke-width="0.48" />
<line x1="274.5" y1="274.16" x2="605.3" y2="274.16" stroke="#a2a2a2" stroke-width="0.48" />
<line x1="274.5" y1="292.54" x2="605.3" y2="292.54" stroke="#a2a2a2" stroke-width="0.48" />
<line x1="274.5" y1="310.92" x2="605.3" y2="310.92" stroke="#a2a2a2" stroke-width="0.48" />
<line x1="274.5" y1="329.3" x2="605.3" y2="329.3" stroke="#a2a2a2" stroke-width="0.48" />
<line x1="274.5" y1="347.68" x2="605.3" y2="347.68" stroke="#a2a2a2" stroke-width="0.48" />
<line x1="274.5" y1="366.06" x2="605.3" y2="366.06" stroke="#a2a2a2" stroke-width="0.48" />
<line x1="274.5" y1="384.44" x2="605.3" y2="384.44" stroke="#a2a2a2" stroke-width="0.48" />
<line x1="274.5" y1="402.82" x2="605.3" y2="402.82" stroke="#a2a2a2" stroke-width="0.48" />
<text x="269.7" y="239.7" xml:space="preserve" font-size="6.37" fill="#000" text-anchor="end" >12</text>
<text x="269.7" y="276.46" xml:space="preserve" font-size="6.37" fill="#000" text-anchor="end" >10.4</text>
<text x="269.7" y="313.22" xml:space="preserve" font-size="6.37" fill="#000" text-anchor="end" >8.8</text>
<text x="269.7" y="349.98" xml:space="preserve" font-size="6.37" fill="#000" text-anchor="end" >7.2</text>
<text x="269.7" y="386.74" xml:space="preserve" font-size="6.37" fill="#000" text-anchor="end" >5.6</text>
<text x="269.7" y="423.5" xml:space="preserve" font-size="6.37" fill="#000" text-anchor="end" >4</text>
<text x="274.5" y="432.8" xml:space="preserve" font-size="6.37" fill="#000" text-anchor="middle" >20</text>
<text x="340.4" y="432.8" xml:space="preserve" font-size="6.37" fill="#000" text-anchor="middle" >50</text>
<text x="390.25" y="432.8" xml:space="preserve" font-size="6.37" fill="#000" text-anchor="middle" >100</text>
<text x="440.1" y="432.8" xml:space="preserve" font-size="6.37" fill="#000" text-anchor="middle" >200</text>
<text x="506" y="432.8" xml:space="preserve" font-size="6.37" fill="#000" text-anchor="middle" >500</text>
<text x="555.85" y="432.8" xml:space="preserve" font-size="6.37" fill="#000" text-anchor="middle" >1k</text>
<text x="605.7" y="432.8" xml:space="preserve" font-size="6.37" fill="#000" text-anchor="middle" >2k</text>
<text x="427" y="440.3" xml:space="preserve" font-size="6.37" fill="#000" textLength="39" lengthAdjust="spacingAndGlyphs" >Frequenz [Hz]</text>
<path d="M274.5 256 C274.92 257.42 276.08 261.5 277 264.5 C277.92 267.5 279 270.83 280 274 C281 277.17 282 280.42 283 283.5 C284 286.58 285 289.75 286 292.5 C287 295.25 287.83 297 289 300 C290.17 303 291.5 307 293 310.5 C294.5 314 296.42 317.83 298 321 C299.58 324.17 301.33 327.17 302.5 329.5 C303.67 331.83 303.67 332.5 305 335 C306.33 337.5 308.5 341.17 310.5 344.5 C312.5 347.83 314.75 351.92 317 355 C319.25 358.08 321.83 360.83 324 363 C326.17 365.17 328 366.5 330 368 C332 369.5 334.17 371 336 372 C337.83 373 339.33 373.77 341 374 C342.67 374.23 344.67 373.73 346 373.4 C347.33 373.07 348 372.9 349 372 C350 371.1 350.83 370.17 352 368 C353.17 365.83 354.83 361.83 356 359 C357.17 356.17 358.17 354 359 351 C359.83 348 360.4 344.17 361 341 C361.6 337.83 362.1 335.17 362.6 332 C363.1 328.83 363.52 325.5 364 322 C364.48 318.5 365 314.5 365.5 311 C366 307.5 366.32 305.33 367 301 C367.68 296.67 368.83 289.25 369.6 285 C370.37 280.75 370.93 278 371.6 275.5 C372.27 273 372.93 270.52 373.6 270 C374.27 269.48 374.93 271.4 375.6 272.4 C376.27 273.4 376.93 273.9 377.6 276 C378.27 278.1 378.7 280.5 379.6 285 C380.5 289.5 381.85 297.5 383 303 C384.15 308.5 385.63 314.33 386.5 318 C387.37 321.67 387.62 322.67 388.2 325 C388.78 327.33 389.2 329.5 390 332 C390.8 334.5 391.83 337.33 393 340 C394.17 342.67 395.5 345.5 397 348 C398.5 350.5 400.33 352.83 402 355 C403.67 357.17 405.33 359.33 407 361 C408.67 362.67 410.17 363.93 412 365 C413.83 366.07 415.67 366.73 418 367.4 C420.33 368.07 423.33 368.33 426 369 C428.67 369.67 431.33 370.47 434 371.4 C436.67 372.33 439.33 373.6 442 374.6 C444.67 375.6 447.33 376.5 450 377.4 C452.67 378.3 455 379.17 458 380 C461 380.83 465 381.87 468 382.4 C471 382.93 472.33 383.03 476 383.2 C479.67 383.37 485.33 383.43 490 383.4 C494.67 383.37 499.33 383.33 504 383 C508.67 382.67 513.67 382 518 381.4 C522.33 380.8 526.33 380.07 530 379.4 C533.67 378.73 536.33 378.23 540 377.4 C543.67 376.57 548 375.47 552 374.4 C556 373.33 560 372.23 564 371 C568 369.77 572.83 368.03 576 367 C579.17 365.97 581.83 365.17 583 364.8" fill="none" stroke="#a43242" stroke-width="0.75" stroke-linecap="round"/>
<rect x="46.9" y="225" width="198.7" height="123" fill="#d4d0c8" />
<rect x="46.9" y="225" width="198.7" height="0.49" fill="#d4d0c8" />
<rect x="46.9" y="225" width="0.48" height="123" fill="#d4d0c8" />
<rect x="46.9" y="347.51" width="198.7" height="0.49" fill="#404040" />
<rect x="245.12" y="225" width="0.48" height="123" fill="#404040" />
<rect x="47.38" y="225.49" width="197.75" height="0.49" fill="#ffffff" />
<rect x="47.38" y="225.49" width="0.48" height="122.02" fill="#ffffff" />
<rect x="47.38" y="347.02" width="197.75" height="0.49" fill="#808080" />
<rect x="244.65" y="225.49" width="0.48" height="122.02" fill="#808080" />
<rect x="48.1" y="226.6" width="196.1" height="8.4" fill="url(#gI)" />
<g transform="translate(50.1,227.08) scale(0.48,0.49)"><path d="M2.2 13.5 L6.6 3.5 L6.2 13 M3.6 9.6 L6.6 9.6" stroke="#000" stroke-width="1.7" fill="none"/><path d="M10.5 1.2 L15 1.2 L11.4 11.5 Q10.4 14.6 6.6 14.2 L7 12.4 Q8.6 12.8 9 11 L11.2 3.2 L10 3.2 Z" fill="#000"/></g>
<text x="57.6" y="232.8" xml:space="preserve" font-size="5.39" fill="#d8d5cf" font-weight="bold" textLength="49.8" lengthAdjust="spacingAndGlyphs" >Konturradius [cm]</text>
<rect x="235.98" y="227.25" width="7.62" height="7.1" fill="#d4d0c8" />
<rect x="235.98" y="227.25" width="7.62" height="0.49" fill="#ffffff" />
<rect x="235.98" y="227.25" width="0.48" height="7.1" fill="#ffffff" />
<rect x="235.98" y="233.86" width="7.62" height="0.49" fill="#404040" />
<rect x="243.12" y="227.25" width="0.48" height="7.1" fill="#404040" />
<rect x="236.46" y="233.37" width="6.67" height="0.49" fill="#808080" />
<rect x="242.65" y="227.74" width="0.48" height="6.12" fill="#808080" />
<g transform="translate(235.98,227.25) scale(0.48,0.51)"><path d="M4 3 L11 10 M11 3 L4 10" stroke="#000" stroke-width="2" fill="none"/></g>
<rect x="227.36" y="227.25" width="7.62" height="7.1" fill="#d4d0c8" />
<rect x="227.36" y="227.25" width="7.62" height="0.49" fill="#ffffff" />
<rect x="227.36" y="227.25" width="0.48" height="7.1" fill="#ffffff" />
<rect x="227.36" y="233.86" width="7.62" height="0.49" fill="#404040" />
<rect x="234.5" y="227.25" width="0.48" height="7.1" fill="#404040" />
<rect x="227.84" y="233.37" width="6.67" height="0.49" fill="#808080" />
<rect x="234.03" y="227.74" width="0.48" height="6.12" fill="#808080" />
<g transform="translate(227.36,227.25) scale(0.48,0.51)"><path d="M4.5 3.5 h9 v9 h-9 z M4.5 4.5 h9" stroke="#fff" fill="none"/><path d="M3.5 2.5 h9 v9 h-9 z M3.5 3.5 h9" stroke="#808080" fill="none"/></g>
<rect x="219.74" y="227.25" width="7.62" height="7.1" fill="#d4d0c8" />
<rect x="219.74" y="227.25" width="7.62" height="0.49" fill="#ffffff" />
<rect x="219.74" y="227.25" width="0.48" height="7.1" fill="#ffffff" />
<rect x="219.74" y="233.86" width="7.62" height="0.49" fill="#404040" />
<rect x="226.89" y="227.25" width="0.48" height="7.1" fill="#404040" />
<rect x="220.22" y="233.37" width="6.67" height="0.49" fill="#808080" />
<rect x="226.41" y="227.74" width="0.48" height="6.12" fill="#808080" />
<g transform="translate(219.74,227.25) scale(0.48,0.51)"><rect x="4" y="9" width="6" height="2" fill="#000"/></g>
<rect x="71.2" y="240.8" width="166.2" height="82" fill="#fff" />
<line x1="104.44" y1="240.8" x2="104.44" y2="322.8" stroke="#c0c0c0" stroke-width="0.48" />
<line x1="71.2" y1="257.2" x2="237.4" y2="257.2" stroke="#c0c0c0" stroke-width="0.48" />
<line x1="137.68" y1="240.8" x2="137.68" y2="322.8" stroke="#c0c0c0" stroke-width="0.48" />
<line x1="71.2" y1="273.6" x2="237.4" y2="273.6" stroke="#c0c0c0" stroke-width="0.48" />
<line x1="170.92" y1="240.8" x2="170.92" y2="322.8" stroke="#c0c0c0" stroke-width="0.48" />
<line x1="71.2" y1="290" x2="237.4" y2="290" stroke="#c0c0c0" stroke-width="0.48" />
<line x1="204.16" y1="240.8" x2="204.16" y2="322.8" stroke="#c0c0c0" stroke-width="0.48" />
<line x1="71.2" y1="306.4" x2="237.4" y2="306.4" stroke="#c0c0c0" stroke-width="0.48" />
<text x="65.8" y="243.6" xml:space="preserve" font-size="7.1" fill="#000" text-anchor="end" textLength="6.3" lengthAdjust="spacingAndGlyphs" >10</text>
<text x="65.8" y="260" xml:space="preserve" font-size="7.1" fill="#000" text-anchor="end" textLength="3.1" lengthAdjust="spacingAndGlyphs" >8</text>
<text x="65.8" y="276.4" xml:space="preserve" font-size="7.1" fill="#000" text-anchor="end" textLength="3.1" lengthAdjust="spacingAndGlyphs" >6</text>
<text x="65.8" y="292.8" xml:space="preserve" font-size="7.1" fill="#000" text-anchor="end" textLength="3.1" lengthAdjust="spacingAndGlyphs" >4</text>
<text x="65.8" y="309.2" xml:space="preserve" font-size="7.1" fill="#000" text-anchor="end" textLength="3.1" lengthAdjust="spacingAndGlyphs" >2</text>
<text x="65.8" y="325.6" xml:space="preserve" font-size="7.1" fill="#000" text-anchor="end" textLength="3.1" lengthAdjust="spacingAndGlyphs" >0</text>
<text x="71.2" y="334.6" xml:space="preserve" font-size="7.1" fill="#000" text-anchor="middle" textLength="3.1" lengthAdjust="spacingAndGlyphs" >0</text>
<text x="104.44" y="334.6" xml:space="preserve" font-size="7.1" fill="#000" text-anchor="middle" textLength="12.2" lengthAdjust="spacingAndGlyphs" >0.454</text>
<text x="137.68" y="334.6" xml:space="preserve" font-size="7.1" fill="#000" text-anchor="middle" textLength="12.2" lengthAdjust="spacingAndGlyphs" >0.908</text>
<text x="170.92" y="334.6" xml:space="preserve" font-size="7.1" fill="#000" text-anchor="middle" textLength="12.2" lengthAdjust="spacingAndGlyphs" >1.362</text>
<text x="204.16" y="334.6" xml:space="preserve" font-size="7.1" fill="#000" text-anchor="middle" textLength="12.2" lengthAdjust="spacingAndGlyphs" >1.816</text>
<text x="237.4" y="334.6" xml:space="preserve" font-size="7.1" fill="#000" text-anchor="middle" textLength="9.6" lengthAdjust="spacingAndGlyphs" >2.27</text>
<text x="154.8" y="342.6" xml:space="preserve" font-size="7.1" fill="#000" text-anchor="middle" textLength="23.5" lengthAdjust="spacingAndGlyphs" >Länge [m]</text>
<polyline points="71.2,254.6 237.4,267.6" fill="none" stroke="#a83444" stroke-width="0.7"/>
<rect x="468.25" y="63.4" width="199.95" height="123.7" fill="#d4d0c8" />
<rect x="468.25" y="63.4" width="199.95" height="0.49" fill="#d4d0c8" />
<rect x="468.25" y="63.4" width="0.48" height="123.7" fill="#d4d0c8" />
<rect x="468.25" y="186.61" width="199.95" height="0.49" fill="#404040" />
<rect x="667.72" y="63.4" width="0.48" height="123.7" fill="#404040" />
<rect x="468.73" y="63.89" width="199" height="0.49" fill="#ffffff" />
<rect x="468.73" y="63.89" width="0.48" height="122.72" fill="#ffffff" />
<rect x="468.73" y="186.12" width="199" height="0.49" fill="#808080" />
<rect x="667.25" y="63.89" width="0.48" height="122.72" fill="#808080" />
<rect x="469.05" y="65" width="198.15" height="8.6" fill="url(#gI)" />
<g transform="translate(471.05,65.58) scale(0.48,0.49)"><path d="M2.2 13.5 L6.6 3.5 L6.2 13 M3.6 9.6 L6.6 9.6" stroke="#000" stroke-width="1.7" fill="none"/><path d="M10.5 1.2 L15 1.2 L11.4 11.5 Q10.4 14.6 6.6 14.2 L7 12.4 Q8.6 12.8 9 11 L11.2 3.2 L10 3.2 Z" fill="#000"/></g>
<text x="479" y="71.3" xml:space="preserve" font-size="5.39" fill="#d8d5cf" font-weight="bold" textLength="73.5" lengthAdjust="spacingAndGlyphs" >Membranamplitude I [mm]</text>
<rect x="656.98" y="65.75" width="7.62" height="7.1" fill="#d4d0c8" />
<rect x="656.98" y="65.75" width="7.62" height="0.49" fill="#ffffff" />
<rect x="656.98" y="65.75" width="0.48" height="7.1" fill="#ffffff" />
<rect x="656.98" y="72.36" width="7.62" height="0.49" fill="#404040" />
<rect x="664.12" y="65.75" width="0.48" height="7.1" fill="#404040" />
<rect x="657.46" y="71.87" width="6.67" height="0.49" fill="#808080" />
<rect x="663.65" y="66.24" width="0.48" height="6.12" fill="#808080" />
<g transform="translate(656.98,65.75) scale(0.48,0.51)"><path d="M4 3 L11 10 M11 3 L4 10" stroke="#000" stroke-width="2" fill="none"/></g>
<rect x="648.36" y="65.75" width="7.62" height="7.1" fill="#d4d0c8" />
<rect x="648.36" y="65.75" width="7.62" height="0.49" fill="#ffffff" />
<rect x="648.36" y="65.75" width="0.48" height="7.1" fill="#ffffff" />
<rect x="648.36" y="72.36" width="7.62" height="0.49" fill="#404040" />
<rect x="655.5" y="65.75" width="0.48" height="7.1" fill="#404040" />
<rect x="648.84" y="71.87" width="6.67" height="0.49" fill="#808080" />
<rect x="655.03" y="66.24" width="0.48" height="6.12" fill="#808080" />
<g transform="translate(648.36,65.75) scale(0.48,0.51)"><path d="M4.5 3.5 h9 v9 h-9 z M4.5 4.5 h9" stroke="#fff" fill="none"/><path d="M3.5 2.5 h9 v9 h-9 z M3.5 3.5 h9" stroke="#808080" fill="none"/></g>
<rect x="640.74" y="65.75" width="7.62" height="7.1" fill="#d4d0c8" />
<rect x="640.74" y="65.75" width="7.62" height="0.49" fill="#ffffff" />
<rect x="640.74" y="65.75" width="0.48" height="7.1" fill="#ffffff" />
<rect x="640.74" y="72.36" width="7.62" height="0.49" fill="#404040" />
<rect x="647.89" y="65.75" width="0.48" height="7.1" fill="#404040" />
<rect x="641.22" y="71.87" width="6.67" height="0.49" fill="#808080" />
<rect x="647.41" y="66.24" width="0.48" height="6.12" fill="#808080" />
<g transform="translate(640.74,65.75) scale(0.48,0.51)"><rect x="4" y="9" width="6" height="2" fill="#000"/></g>
<rect x="492.3" y="80" width="165.9" height="82.6" fill="#fff" />
<line x1="506.95" y1="80" x2="506.95" y2="162.6" stroke="#7c7c7c" stroke-width="0.48" />
<line x1="517.35" y1="80" x2="517.35" y2="162.6" stroke="#7c7c7c" stroke-width="0.48" />
<line x1="525.41" y1="80" x2="525.41" y2="162.6" stroke="#7c7c7c" stroke-width="0.48" />
<line x1="532" y1="80" x2="532" y2="162.6" stroke="#7c7c7c" stroke-width="0.48" />
<line x1="537.57" y1="80" x2="537.57" y2="162.6" stroke="#7c7c7c" stroke-width="0.48" />
<line x1="542.39" y1="80" x2="542.39" y2="162.6" stroke="#7c7c7c" stroke-width="0.48" />
<line x1="546.65" y1="80" x2="546.65" y2="162.6" stroke="#7c7c7c" stroke-width="0.48" />
<line x1="550.45" y1="80" x2="550.45" y2="162.6" stroke="#7c7c7c" stroke-width="0.48" />
<line x1="575.5" y1="80" x2="575.5" y2="162.6" stroke="#7c7c7c" stroke-width="0.48" />
<line x1="590.15" y1="80" x2="590.15" y2="162.6" stroke="#7c7c7c" stroke-width="0.48" />
<line x1="600.55" y1="80" x2="600.55" y2="162.6" stroke="#7c7c7c" stroke-width="0.48" />
<line x1="608.61" y1="80" x2="608.61" y2="162.6" stroke="#7c7c7c" stroke-width="0.48" />
<line x1="615.2" y1="80" x2="615.2" y2="162.6" stroke="#7c7c7c" stroke-width="0.48" />
<line x1="620.77" y1="80" x2="620.77" y2="162.6" stroke="#7c7c7c" stroke-width="0.48" />
<line x1="625.59" y1="80" x2="625.59" y2="162.6" stroke="#7c7c7c" stroke-width="0.48" />
<line x1="629.85" y1="80" x2="629.85" y2="162.6" stroke="#7c7c7c" stroke-width="0.48" />
<line x1="633.65" y1="80" x2="633.65" y2="162.6" stroke="#7c7c7c" stroke-width="0.48" />
<line x1="492.3" y1="88.26" x2="658.2" y2="88.26" stroke="#909090" stroke-width="0.48" />
<line x1="492.3" y1="96.52" x2="658.2" y2="96.52" stroke="#909090" stroke-width="0.48" />
<line x1="492.3" y1="104.78" x2="658.2" y2="104.78" stroke="#909090" stroke-width="0.48" />
<line x1="492.3" y1="113.04" x2="658.2" y2="113.04" stroke="#909090" stroke-width="0.48" />
<line x1="492.3" y1="121.3" x2="658.2" y2="121.3" stroke="#909090" stroke-width="0.48" />
<line x1="492.3" y1="129.56" x2="658.2" y2="129.56" stroke="#909090" stroke-width="0.48" />
<line x1="492.3" y1="137.82" x2="658.2" y2="137.82" stroke="#909090" stroke-width="0.48" />
<line x1="492.3" y1="146.08" x2="658.2" y2="146.08" stroke="#909090" stroke-width="0.48" />
<line x1="492.3" y1="154.34" x2="658.2" y2="154.34" stroke="#909090" stroke-width="0.48" />
<text x="487.1" y="82.2" xml:space="preserve" font-size="6.37" fill="#000" text-anchor="end" >1</text>
<text x="487.1" y="98.72" xml:space="preserve" font-size="6.37" fill="#000" text-anchor="end" >0.8</text>
<text x="487.1" y="115.24" xml:space="preserve" font-size="6.37" fill="#000" text-anchor="end" >0.6</text>
<text x="487.1" y="131.76" xml:space="preserve" font-size="6.37" fill="#000" text-anchor="end" >0.4</text>
<text x="487.1" y="148.28" xml:space="preserve" font-size="6.37" fill="#000" text-anchor="end" >0.2</text>
<text x="487.1" y="164.8" xml:space="preserve" font-size="6.37" fill="#000" text-anchor="end" >0</text>
<text x="492.3" y="174.6" xml:space="preserve" font-size="6.37" fill="#000" text-anchor="middle" >20</text>
<text x="525.41" y="174.6" xml:space="preserve" font-size="6.37" fill="#000" text-anchor="middle" >50</text>
<text x="550.45" y="174.6" xml:space="preserve" font-size="6.37" fill="#000" text-anchor="middle" >100</text>
<text x="575.5" y="174.6" xml:space="preserve" font-size="6.37" fill="#000" text-anchor="middle" >200</text>
<text x="608.61" y="174.6" xml:space="preserve" font-size="6.37" fill="#000" text-anchor="middle" >500</text>
<text x="633.65" y="174.6" xml:space="preserve" font-size="6.37" fill="#000" text-anchor="middle" >1k</text>
<text x="658.7" y="174.6" xml:space="preserve" font-size="6.37" fill="#000" text-anchor="middle" >2k</text>
<text x="575.25" y="181.5" xml:space="preserve" font-size="6.37" fill="#000" text-anchor="middle" >Frequenz [Hz]</text>
<path d="M492.3 86.25 C492.75 89.38 493.93 99.38 495 105 C496.07 110.62 497.5 115.62 498.75 120 C500 124.38 501.25 128.25 502.5 131.25 C503.75 134.25 505.08 136.54 506.25 138 C507.42 139.46 508.25 140.08 509.5 140 C510.75 139.92 512.21 139.17 513.75 137.5 C515.29 135.83 517.08 133.12 518.75 130 C520.42 126.88 522.08 122.92 523.75 118.75 C525.42 114.58 527.29 108.96 528.75 105 C530.21 101.04 531.46 97.38 532.5 95 C533.54 92.62 534.17 91.71 535 90.75 C535.83 89.79 536.67 89.17 537.5 89.25 C538.33 89.33 538.96 89.04 540 91.25 C541.04 93.46 542.5 98.12 543.75 102.5 C545 106.88 546.25 112.92 547.5 117.5 C548.75 122.08 550 126.46 551.25 130 C552.5 133.54 553.54 136.25 555 138.75 C556.46 141.25 557.92 143.12 560 145 C562.08 146.88 564.58 148.5 567.5 150 C570.42 151.5 573.75 152.5 577.5 154 C581.25 155.5 585.42 157.77 590 159 C594.58 160.23 600 160.87 605 161.4 C610 161.93 612.83 162.03 620 162.2 C627.17 162.37 643.33 162.37 648 162.4" fill="none" stroke="#a43242" stroke-width="0.75" stroke-linecap="round"/>
<rect x="469.6" y="252.2" width="72.2" height="98.7" fill="#d4d0c8" />
<rect x="469.6" y="252.2" width="72.2" height="0.49" fill="#d4d0c8" />
<rect x="469.6" y="252.2" width="0.48" height="98.7" fill="#d4d0c8" />
<rect x="469.6" y="350.41" width="72.2" height="0.49" fill="#404040" />
<rect x="541.32" y="252.2" width="0.48" height="98.7" fill="#404040" />
<rect x="470.08" y="252.69" width="71.25" height="0.49" fill="#ffffff" />
<rect x="470.08" y="252.69" width="0.48" height="97.72" fill="#ffffff" />
<rect x="470.08" y="349.92" width="71.25" height="0.49" fill="#808080" />
<rect x="540.85" y="252.69" width="0.48" height="97.72" fill="#808080" />
<rect x="470.3" y="253.6" width="70.6" height="8" fill="url(#gI)" />
<g transform="translate(472.3,253.88) scale(0.48,0.49)"><path d="M2.2 13.5 L6.6 3.5 L6.2 13 M3.6 9.6 L6.6 9.6" stroke="#000" stroke-width="1.7" fill="none"/><path d="M10.5 1.2 L15 1.2 L11.4 11.5 Q10.4 14.6 6.6 14.2 L7 12.4 Q8.6 12.8 9 11 L11.2 3.2 L10 3.2 Z" fill="#000"/></g>
<text x="479.6" y="259.6" xml:space="preserve" font-size="5.39" fill="#d8d5cf" font-weight="bold" >Sonstiges</text>
<rect x="531.78" y="254.05" width="7.62" height="7.1" fill="#d4d0c8" />
<rect x="531.78" y="254.05" width="7.62" height="0.49" fill="#ffffff" />
<rect x="531.78" y="254.05" width="0.48" height="7.1" fill="#ffffff" />
<rect x="531.78" y="260.66" width="7.62" height="0.49" fill="#404040" />
<rect x="538.92" y="254.05" width="0.48" height="7.1" fill="#404040" />
<rect x="532.26" y="260.17" width="6.67" height="0.49" fill="#808080" />
<rect x="538.45" y="254.54" width="0.48" height="6.12" fill="#808080" />
<g transform="translate(531.78,254.05) scale(0.48,0.51)"><path d="M4 3 L11 10 M11 3 L4 10" stroke="#000" stroke-width="2" fill="none"/></g>
<rect x="523.16" y="254.05" width="7.62" height="7.1" fill="#d4d0c8" />
<rect x="523.16" y="254.05" width="7.62" height="0.49" fill="#ffffff" />
<rect x="523.16" y="254.05" width="0.48" height="7.1" fill="#ffffff" />
<rect x="523.16" y="260.66" width="7.62" height="0.49" fill="#404040" />
<rect x="530.3" y="254.05" width="0.48" height="7.1" fill="#404040" />
<rect x="523.64" y="260.17" width="6.67" height="0.49" fill="#808080" />
<rect x="529.83" y="254.54" width="0.48" height="6.12" fill="#808080" />
<g transform="translate(523.16,254.05) scale(0.48,0.51)"><path d="M4.5 3.5 h9 v9 h-9 z M4.5 4.5 h9" stroke="#fff" fill="none"/><path d="M3.5 2.5 h9 v9 h-9 z M3.5 3.5 h9" stroke="#808080" fill="none"/></g>
<rect x="515.54" y="254.05" width="7.62" height="7.1" fill="#d4d0c8" />
<rect x="515.54" y="254.05" width="7.62" height="0.49" fill="#ffffff" />
<rect x="515.54" y="254.05" width="0.48" height="7.1" fill="#ffffff" />
<rect x="515.54" y="260.66" width="7.62" height="0.49" fill="#404040" />
<rect x="522.69" y="254.05" width="0.48" height="7.1" fill="#404040" />
<rect x="516.02" y="260.17" width="6.67" height="0.49" fill="#808080" />
<rect x="522.21" y="254.54" width="0.48" height="6.12" fill="#808080" />
<g transform="translate(515.54,254.05) scale(0.48,0.51)"><rect x="4" y="9" width="6" height="2" fill="#000"/></g>
<text x="472.8" y="272.4" xml:space="preserve" font-size="5.1" fill="#000" >Cmr = 1.243 mm/N</text>
<text x="472.8" y="278.62" xml:space="preserve" font-size="5.1" fill="#000" >Mmr = 9.47 g</text>
<text x="472.8" y="284.84" xml:space="preserve" font-size="5.1" fill="#000" >Rmr = 0.28 kg/s</text>
<text x="472.8" y="291.06" xml:space="preserve" font-size="5.1" fill="#000" >BxL = 3.63 N/A</text>
<text x="472.8" y="297.28" xml:space="preserve" font-size="5.1" fill="#000" >Pe = 1.6 W</text>
<text x="472.8" y="303.5" xml:space="preserve" font-size="5.1" fill="#000" >Qts = 0.945</text>
<text x="472.8" y="315.94" xml:space="preserve" font-size="5.1" fill="#000" >VHorn = 40.25 l</text>
<text x="472.8" y="322.16" xml:space="preserve" font-size="5.1" fill="#000" >Vgesamt = 40.25 l</text>
<rect x="531.8" y="266.5" width="8" height="82" fill="#dfdcd6" />
<rect x="531.8" y="266.5" width="8" height="7.9" fill="#d4d0c8" />
<rect x="531.8" y="266.5" width="8" height="0.49" fill="#ffffff" />
<rect x="531.8" y="266.5" width="0.48" height="7.9" fill="#ffffff" />
<rect x="531.8" y="273.91" width="8" height="0.49" fill="#404040" />
<rect x="539.32" y="266.5" width="0.48" height="7.9" fill="#404040" />
<rect x="532.28" y="273.42" width="7.05" height="0.49" fill="#808080" />
<rect x="538.85" y="266.99" width="0.48" height="6.92" fill="#808080" />
<rect x="531.8" y="340.3" width="8" height="8.2" fill="#d4d0c8" />
<rect x="531.8" y="340.3" width="8" height="0.49" fill="#ffffff" />
<rect x="531.8" y="340.3" width="0.48" height="8.2" fill="#ffffff" />
<rect x="531.8" y="348.01" width="8" height="0.49" fill="#404040" />
<rect x="539.32" y="340.3" width="0.48" height="8.2" fill="#404040" />
<rect x="532.28" y="347.52" width="7.05" height="0.49" fill="#808080" />
<rect x="538.85" y="340.79" width="0.48" height="7.22" fill="#808080" />
<path d="M534.3 271.3 l1.5 -1.6 l1.5 1.6z" fill="#808080"/>
<path d="M534.3 343.6 l1.5 1.6 l1.5 -1.6z" fill="#808080"/>
<rect x="46.9" y="452.7" width="76" height="12.1" fill="#d4d0c8" />
<rect x="46.9" y="452.7" width="76" height="0.49" fill="#d4d0c8" />
<rect x="46.9" y="452.7" width="0.48" height="12.1" fill="#d4d0c8" />
<rect x="46.9" y="464.31" width="76" height="0.49" fill="#404040" />
<rect x="122.42" y="452.7" width="0.48" height="12.1" fill="#404040" />
<rect x="47.38" y="453.19" width="75.05" height="0.49" fill="#ffffff" />
<rect x="47.38" y="453.19" width="0.48" height="11.12" fill="#ffffff" />
<rect x="47.38" y="463.82" width="75.05" height="0.49" fill="#808080" />
<rect x="121.95" y="453.19" width="0.48" height="11.12" fill="#808080" />
<rect x="48.5" y="454.6" width="72.6" height="8.3" fill="url(#gA)" />
<text x="58.8" y="460.75" xml:space="preserve" font-size="5.39" fill="#fff" font-weight="bold" textLength="36.8" lengthAdjust="spacingAndGlyphs" >Akustische I...</text>
<rect x="113.28" y="455.2" width="7.62" height="7.1" fill="#d4d0c8" />
<rect x="113.28" y="455.2" width="7.62" height="0.49" fill="#ffffff" />
<rect x="113.28" y="455.2" width="0.48" height="7.1" fill="#ffffff" />
<rect x="113.28" y="461.81" width="7.62" height="0.49" fill="#404040" />
<rect x="120.42" y="455.2" width="0.48" height="7.1" fill="#404040" />
<rect x="113.76" y="461.32" width="6.67" height="0.49" fill="#808080" />
<rect x="119.95" y="455.69" width="0.48" height="6.12" fill="#808080" />
<g transform="translate(113.28,455.2) scale(0.48,0.51)"><path d="M4 3 L11 10 M11 3 L4 10" stroke="#000" stroke-width="2" fill="none"/></g>
<rect x="104.66" y="455.2" width="7.62" height="7.1" fill="#d4d0c8" />
<rect x="104.66" y="455.2" width="7.62" height="0.49" fill="#ffffff" />
<rect x="104.66" y="455.2" width="0.48" height="7.1" fill="#ffffff" />
<rect x="104.66" y="461.81" width="7.62" height="0.49" fill="#404040" />
<rect x="111.8" y="455.2" width="0.48" height="7.1" fill="#404040" />
<rect x="105.14" y="461.32" width="6.67" height="0.49" fill="#808080" />
<rect x="111.33" y="455.69" width="0.48" height="6.12" fill="#808080" />
<g transform="translate(104.66,455.2) scale(0.48,0.51)"><path d="M4.5 3.5 h9 v9 h-9 z M4.5 4.5 h9" stroke="#fff" fill="none"/><path d="M3.5 2.5 h9 v9 h-9 z M3.5 3.5 h9" stroke="#808080" fill="none"/></g>
<rect x="97.04" y="455.2" width="7.62" height="7.1" fill="#d4d0c8" />
<rect x="97.04" y="455.2" width="7.62" height="0.49" fill="#ffffff" />
<rect x="97.04" y="455.2" width="0.48" height="7.1" fill="#ffffff" />
<rect x="97.04" y="461.81" width="7.62" height="0.49" fill="#404040" />
<rect x="104.19" y="455.2" width="0.48" height="7.1" fill="#404040" />
<rect x="97.52" y="461.32" width="6.67" height="0.49" fill="#808080" />
<rect x="103.71" y="455.69" width="0.48" height="6.12" fill="#808080" />
<g transform="translate(97.04,455.2) scale(0.48,0.51)"><path d="M5.5 2.5 h6 v5 h-2 M5.5 3.5 h6" stroke="#000" fill="none"/><path d="M3.5 5.5 h6 v5 h-6 z M3.5 6.5 h6" stroke="#000" fill="none"/></g>
<rect x="46.9" y="467.3" width="76" height="11.9" fill="#d4d0c8" />
<rect x="46.9" y="467.3" width="76" height="0.49" fill="#d4d0c8" />
<rect x="46.9" y="467.3" width="0.48" height="11.9" fill="#d4d0c8" />
<rect x="46.9" y="478.71" width="76" height="0.49" fill="#404040" />
<rect x="122.42" y="467.3" width="0.48" height="11.9" fill="#404040" />
<rect x="47.38" y="467.79" width="75.05" height="0.49" fill="#ffffff" />
<rect x="47.38" y="467.79" width="0.48" height="10.92" fill="#ffffff" />
<rect x="47.38" y="478.22" width="75.05" height="0.49" fill="#808080" />
<rect x="121.95" y="467.79" width="0.48" height="10.92" fill="#808080" />
<rect x="48.5" y="469.2" width="72.6" height="8.3" fill="url(#gI)" />
<g transform="translate(50.5,469.63) scale(0.48,0.49)"><path d="M2.2 13.5 L6.6 3.5 L6.2 13 M3.6 9.6 L6.6 9.6" stroke="#000" stroke-width="1.7" fill="none"/><path d="M10.5 1.2 L15 1.2 L11.4 11.5 Q10.4 14.6 6.6 14.2 L7 12.4 Q8.6 12.8 9 11 L11.2 3.2 L10 3.2 Z" fill="#000"/></g>
<text x="58.8" y="475.35" xml:space="preserve" font-size="5.39" fill="#d8d5cf" font-weight="bold" textLength="33.75" lengthAdjust="spacingAndGlyphs" >SPLmax [dB]</text>
<rect x="113.28" y="469.8" width="7.62" height="7.1" fill="#d4d0c8" />
<rect x="113.28" y="469.8" width="7.62" height="0.49" fill="#ffffff" />
<rect x="113.28" y="469.8" width="0.48" height="7.1" fill="#ffffff" />
<rect x="113.28" y="476.41" width="7.62" height="0.49" fill="#404040" />
<rect x="120.42" y="469.8" width="0.48" height="7.1" fill="#404040" />
<rect x="113.76" y="475.92" width="6.67" height="0.49" fill="#808080" />
<rect x="119.95" y="470.29" width="0.48" height="6.12" fill="#808080" />
<g transform="translate(113.28,469.8) scale(0.48,0.51)"><path d="M4 3 L11 10 M11 3 L4 10" stroke="#000" stroke-width="2" fill="none"/></g>
<rect x="104.66" y="469.8" width="7.62" height="7.1" fill="#d4d0c8" />
<rect x="104.66" y="469.8" width="7.62" height="0.49" fill="#ffffff" />
<rect x="104.66" y="469.8" width="0.48" height="7.1" fill="#ffffff" />
<rect x="104.66" y="476.41" width="7.62" height="0.49" fill="#404040" />
<rect x="111.8" y="469.8" width="0.48" height="7.1" fill="#404040" />
<rect x="105.14" y="475.92" width="6.67" height="0.49" fill="#808080" />
<rect x="111.33" y="470.29" width="0.48" height="6.12" fill="#808080" />
<g transform="translate(104.66,469.8) scale(0.48,0.51)"><path d="M4.5 3.5 h9 v9 h-9 z M4.5 4.5 h9" stroke="#fff" fill="none"/><path d="M3.5 2.5 h9 v9 h-9 z M3.5 3.5 h9" stroke="#808080" fill="none"/></g>
<rect x="97.04" y="469.8" width="7.62" height="7.1" fill="#d4d0c8" />
<rect x="97.04" y="469.8" width="7.62" height="0.49" fill="#ffffff" />
<rect x="97.04" y="469.8" width="0.48" height="7.1" fill="#ffffff" />
<rect x="97.04" y="476.41" width="7.62" height="0.49" fill="#404040" />
<rect x="104.19" y="469.8" width="0.48" height="7.1" fill="#404040" />
<rect x="97.52" y="475.92" width="6.67" height="0.49" fill="#808080" />
<rect x="103.71" y="470.29" width="0.48" height="6.12" fill="#808080" />
<g transform="translate(97.04,469.8) scale(0.48,0.51)"><path d="M5.5 2.5 h6 v5 h-2 M5.5 3.5 h6" stroke="#000" fill="none"/><path d="M3.5 5.5 h6 v5 h-6 z M3.5 6.5 h6" stroke="#000" fill="none"/></g>
<rect x="46.9" y="482" width="76" height="12.1" fill="#d4d0c8" />
<rect x="46.9" y="482" width="76" height="0.49" fill="#d4d0c8" />
<rect x="46.9" y="482" width="0.48" height="12.1" fill="#d4d0c8" />
<rect x="46.9" y="493.61" width="76" height="0.49" fill="#404040" />
<rect x="122.42" y="482" width="0.48" height="12.1" fill="#404040" />
<rect x="47.38" y="482.49" width="75.05" height="0.49" fill="#ffffff" />
<rect x="47.38" y="482.49" width="0.48" height="11.12" fill="#ffffff" />
<rect x="47.38" y="493.12" width="75.05" height="0.49" fill="#808080" />
<rect x="121.95" y="482.49" width="0.48" height="11.12" fill="#808080" />
<rect x="48.5" y="483.9" width="72.6" height="8.3" fill="url(#gI)" />
<g transform="translate(50.5,484.33) scale(0.48,0.49)"><path d="M2.2 13.5 L6.6 3.5 L6.2 13 M3.6 9.6 L6.6 9.6" stroke="#000" stroke-width="1.7" fill="none"/><path d="M10.5 1.2 L15 1.2 L11.4 11.5 Q10.4 14.6 6.6 14.2 L7 12.4 Q8.6 12.8 9 11 L11.2 3.2 L10 3.2 Z" fill="#000"/></g>
<text x="58.8" y="490.05" xml:space="preserve" font-size="5.39" fill="#d8d5cf" font-weight="bold" textLength="28.75" lengthAdjust="spacingAndGlyphs" >Pmax1 [W]</text>
<rect x="113.28" y="484.5" width="7.62" height="7.1" fill="#d4d0c8" />
<rect x="113.28" y="484.5" width="7.62" height="0.49" fill="#ffffff" />
<rect x="113.28" y="484.5" width="0.48" height="7.1" fill="#ffffff" />
<rect x="113.28" y="491.11" width="7.62" height="0.49" fill="#404040" />
<rect x="120.42" y="484.5" width="0.48" height="7.1" fill="#404040" />
<rect x="113.76" y="490.62" width="6.67" height="0.49" fill="#808080" />
<rect x="119.95" y="484.99" width="0.48" height="6.12" fill="#808080" />
<g transform="translate(113.28,484.5) scale(0.48,0.51)"><path d="M4 3 L11 10 M11 3 L4 10" stroke="#000" stroke-width="2" fill="none"/></g>
<rect x="104.66" y="484.5" width="7.62" height="7.1" fill="#d4d0c8" />
<rect x="104.66" y="484.5" width="7.62" height="0.49" fill="#ffffff" />
<rect x="104.66" y="484.5" width="0.48" height="7.1" fill="#ffffff" />
<rect x="104.66" y="491.11" width="7.62" height="0.49" fill="#404040" />
<rect x="111.8" y="484.5" width="0.48" height="7.1" fill="#404040" />
<rect x="105.14" y="490.62" width="6.67" height="0.49" fill="#808080" />
<rect x="111.33" y="484.99" width="0.48" height="6.12" fill="#808080" />
<g transform="translate(104.66,484.5) scale(0.48,0.51)"><path d="M4.5 3.5 h9 v9 h-9 z M4.5 4.5 h9" stroke="#fff" fill="none"/><path d="M3.5 2.5 h9 v9 h-9 z M3.5 3.5 h9" stroke="#808080" fill="none"/></g>
<rect x="97.04" y="484.5" width="7.62" height="7.1" fill="#d4d0c8" />
<rect x="97.04" y="484.5" width="7.62" height="0.49" fill="#ffffff" />
<rect x="97.04" y="484.5" width="0.48" height="7.1" fill="#ffffff" />
<rect x="97.04" y="491.11" width="7.62" height="0.49" fill="#404040" />
<rect x="104.19" y="484.5" width="0.48" height="7.1" fill="#404040" />
<rect x="97.52" y="490.62" width="6.67" height="0.49" fill="#808080" />
<rect x="103.71" y="484.99" width="0.48" height="6.12" fill="#808080" />
<g transform="translate(97.04,484.5) scale(0.48,0.51)"><path d="M5.5 2.5 h6 v5 h-2 M5.5 3.5 h6" stroke="#000" fill="none"/><path d="M3.5 5.5 h6 v5 h-6 z M3.5 6.5 h6" stroke="#000" fill="none"/></g>
</g>
</svg>
</body></html>
